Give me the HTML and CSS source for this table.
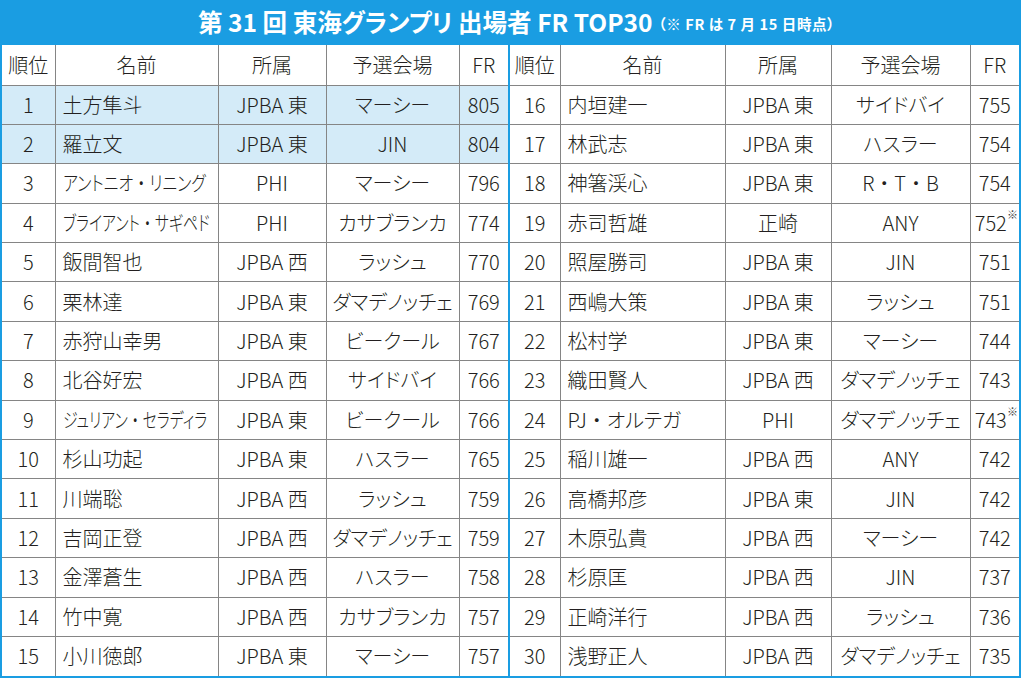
FILE: index.html
```html
<!DOCTYPE html>
<html lang="ja">
<head>
<meta charset="utf-8">
<title>第31回 東海グランプリ 出場者 FR TOP30</title>
<link rel="stylesheet" href="styles.css">
</head>
<body>
<div class="board">
  <div class="title">
    <span class="main">第 31 回 東海グランプリ 出場者 FR TOP30</span>
    <span class="note">（※ FR は 7 月 15 日時点）</span>
  </div>
  <table class="rank">
    <colgroup>
      <col class="c-no"><col class="c-name"><col class="c-aff"><col class="c-venue"><col class="c-fr">
      <col class="c-no2"><col class="c-name2"><col class="c-aff2"><col class="c-venue2"><col class="c-fr2">
    </colgroup>
    <thead>
      <tr>
        <th>順位</th><th>名前</th><th>所属</th><th>予選会場</th><th>FR</th>
        <th class="split">順位</th><th>名前</th><th>所属</th><th>予選会場</th><th>FR</th>
      </tr>
    </thead>
    <tbody>
      <tr>
        <td class="hl">1</td><td class="name hl">土方隼斗</td><td class="hl">JPBA 東</td><td class="hl">マーシー</td><td class="hl">805</td>
        <td class="split">16</td><td class="name">内垣建一</td><td>JPBA 東</td><td>サイドバイ</td><td>755</td>
      </tr>
      <tr>
        <td class="hl">2</td><td class="name hl">羅立文</td><td class="hl">JPBA 東</td><td class="hl">JIN</td><td class="hl">804</td>
        <td class="split">17</td><td class="name">林武志</td><td>JPBA 東</td><td>ハスラー</td><td>754</td>
      </tr>
      <tr>
        <td>3</td><td class="name"><span class="narrow">アントニオ<span class="dot">・</span>リニング</span></td><td>PHI</td><td>マーシー</td><td>796</td>
        <td class="split">18</td><td class="name">神箸渓心</td><td>JPBA 東</td><td>R<span class="dot">・</span>T<span class="dot">・</span>B</td><td>754</td>
      </tr>
      <tr>
        <td>4</td><td class="name"><span class="narrow tight">ブライアント<span class="dot">・</span>サギペド</span></td><td>PHI</td><td>カサブランカ</td><td>774</td>
        <td class="split">19</td><td class="name">赤司哲雄</td><td>正崎</td><td>ANY</td><td class="fr-note">752<span class="mark">※</span></td>
      </tr>
      <tr>
        <td>5</td><td class="name">飯間智也</td><td>JPBA 西</td><td>ラッシュ</td><td>770</td>
        <td class="split">20</td><td class="name">照屋勝司</td><td>JPBA 東</td><td>JIN</td><td>751</td>
      </tr>
      <tr>
        <td>6</td><td class="name">栗林達</td><td>JPBA 東</td><td>ダマデノッチェ</td><td>769</td>
        <td class="split">21</td><td class="name">西嶋大策</td><td>JPBA 東</td><td>ラッシュ</td><td>751</td>
      </tr>
      <tr>
        <td>7</td><td class="name">赤狩山幸男</td><td>JPBA 東</td><td>ビークール</td><td>767</td>
        <td class="split">22</td><td class="name">松村学</td><td>JPBA 東</td><td>マーシー</td><td>744</td>
      </tr>
      <tr>
        <td>8</td><td class="name">北谷好宏</td><td>JPBA 西</td><td>サイドバイ</td><td>766</td>
        <td class="split">23</td><td class="name">織田賢人</td><td>JPBA 西</td><td>ダマデノッチェ</td><td>743</td>
      </tr>
      <tr>
        <td>9</td><td class="name"><span class="narrow tight">ジュリアン<span class="dot">・</span>セラディラ</span></td><td>JPBA 東</td><td>ビークール</td><td>766</td>
        <td class="split">24</td><td class="name">PJ<span class="dot">・</span>オルテガ</td><td>PHI</td><td>ダマデノッチェ</td><td class="fr-note">743<span class="mark">※</span></td>
      </tr>
      <tr>
        <td>10</td><td class="name">杉山功起</td><td>JPBA 東</td><td>ハスラー</td><td>765</td>
        <td class="split">25</td><td class="name">稲川雄一</td><td>JPBA 西</td><td>ANY</td><td>742</td>
      </tr>
      <tr>
        <td>11</td><td class="name">川端聡</td><td>JPBA 西</td><td>ラッシュ</td><td>759</td>
        <td class="split">26</td><td class="name">高橋邦彦</td><td>JPBA 東</td><td>JIN</td><td>742</td>
      </tr>
      <tr>
        <td>12</td><td class="name">吉岡正登</td><td>JPBA 西</td><td>ダマデノッチェ</td><td>759</td>
        <td class="split">27</td><td class="name">木原弘貴</td><td>JPBA 西</td><td>マーシー</td><td>742</td>
      </tr>
      <tr>
        <td>13</td><td class="name">金澤蒼生</td><td>JPBA 西</td><td>ハスラー</td><td>758</td>
        <td class="split">28</td><td class="name">杉原匡</td><td>JPBA 西</td><td>JIN</td><td>737</td>
      </tr>
      <tr>
        <td>14</td><td class="name">竹中寛</td><td>JPBA 西</td><td>カサブランカ</td><td>757</td>
        <td class="split">29</td><td class="name">正崎洋行</td><td>JPBA 西</td><td>ラッシュ</td><td>736</td>
      </tr>
      <tr>
        <td>15</td><td class="name">小川徳郎</td><td>JPBA 東</td><td>マーシー</td><td>757</td>
        <td class="split">30</td><td class="name">浅野正人</td><td>JPBA 西</td><td>ダマデノッチェ</td><td>735</td>
      </tr>
    </tbody>
  </table>
</div>
</body>
</html>
```

FILE: styles.css
```css
html, body {
  margin: 0;
  padding: 0;
  background: #ffffff;
}

body {
  font-family: "Noto Sans CJK JP", "Noto Sans", sans-serif;
  color: #231f20;
}

.board {
  width: 1017px;
  border: 2px solid #1a9de2;
  border-top: 0;
  background: #ffffff;
}

.title {
  height: 45px;
  background: #1a9de2;
  color: #ffffff;
  font-weight: 700;
  display: flex;
  align-items: center;
  justify-content: center;
  gap: 6px;
  font-feature-settings: "palt";
  padding-left: 12px;
}

.title .main {
  font-size: 24.5px;
  letter-spacing: 0;
  line-height: 1;
}

.title .note {
  font-size: 14.5px;
  line-height: 1;
  padding-top: 3px;
  letter-spacing: 0.6px;
}

.rank {
  width: 1017px;
  table-layout: fixed;
  border-collapse: collapse;
  border-style: hidden;
  font-size: 20px;
  font-weight: 300;
  font-feature-settings: "palt";
}

.c-no { width: 53px; }
.c-name { width: 163px; }
.c-aff { width: 108px; }
.c-venue { width: 133px; }
.c-fr { width: 50px; }
.c-no2 { width: 51px; }
.c-name2 { width: 165px; }
.c-aff2 { width: 106px; }
.c-venue2 { width: 139px; }
.c-fr2 { width: 49px; }

.rank th,
.rank td {
  border: 1px solid #858585;
  text-align: center;
  vertical-align: middle;
  padding: 0;
  font-weight: 300;
  white-space: nowrap;
  line-height: 1;
  overflow: hidden;
}

.rank thead tr { height: 40px; }
.rank tbody tr { height: 39.4px; }

.rank td.name {
  text-align: left;
  padding-left: 7px;
}

.rank .split {
  border-left: 2px solid #1a9de2;
}

.rank td.hl {
  background: #d4ebf8;
}

.dot {
  font-feature-settings: normal;
}

.narrow {
  display: inline-block;
  transform: scaleX(0.8);
  transform-origin: left center;
}

.narrow.tight {
  transform: scaleX(0.745);
}

.fr-note {
  position: relative;
  text-indent: -8px;
}

.mark {
  position: absolute;
  font-size: 11px;
  top: 5px;
  right: 1px;
  text-indent: 0;
  color: #444444;
}
```
